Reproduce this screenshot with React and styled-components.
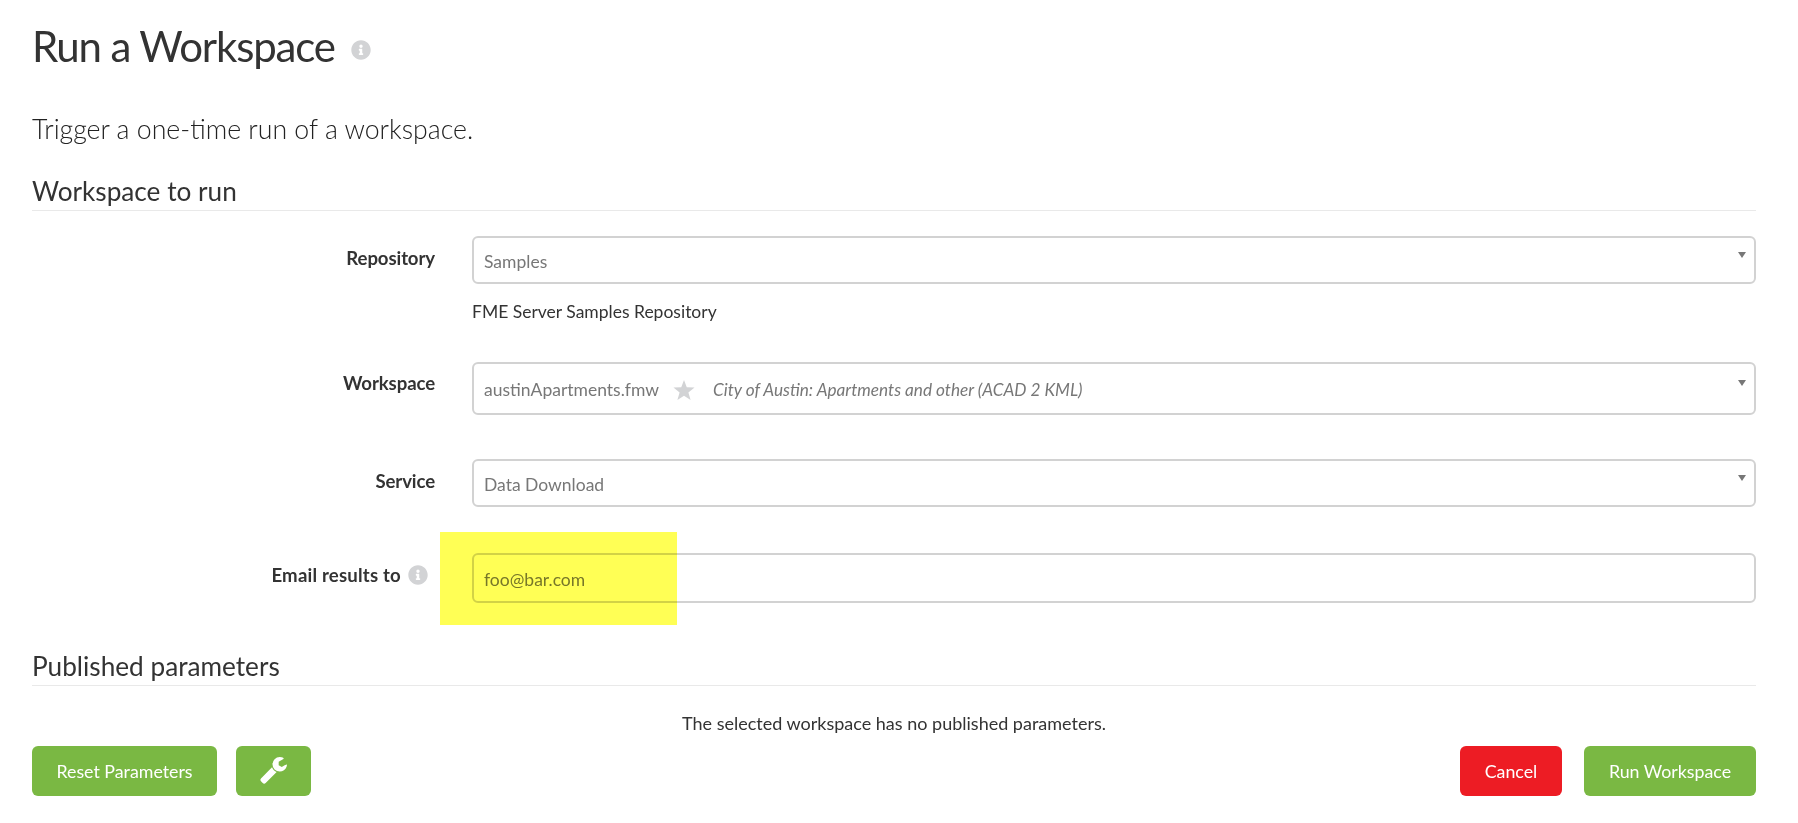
import React from 'react'
import styled, { createGlobalStyle } from 'styled-components'
import { FaInfoCircle } from 'react-icons/fa'

const GlobalStyle = createGlobalStyle`
  html, body {
    margin: 0;
    background: #fff;
    overflow: hidden;
  }
  body {
    font-family: Lato, "Open Sans", sans-serif;
    color: #333;
  }
`

const Page = styled.div`
  width: 1724px;
  margin-left: 32px;
`

const Title = styled.h1`
  display: flex;
  align-items: center;
  margin: 0;
  padding-top: 18px;
  height: 56px;
  font-size: 42px;
  line-height: 56px;
  font-weight: 400;
  letter-spacing: -1.15px;
  color: #333;
`

const TitleInfo = styled(FaInfoCircle)`
  margin: 7px 0 0 16px;
  width: 20px;
  height: 20px;
  color: #d2d3d5;
`

const Lead = styled.p`
  margin: 37px 0 0;
  font-size: 26.7px;
  line-height: 36px;
  font-weight: 300;
  color: #222;
`

const Section = styled.h2`
  margin: ${(p) => p.$top}px 0 0;
  height: ${(p) => p.$height}px;
  font-size: 26.2px;
  line-height: 34px;
  font-weight: 400;
  color: #333;
  border-bottom: 1px solid #e9e9e9;
`

const Row = styled.div`
  position: relative;
  display: grid;
  grid-template-columns: 403px 1fr;
  column-gap: 37px;
  margin-top: ${(p) => p.$top}px;
`

const Label = styled.label`
  display: flex;
  justify-content: flex-end;
  align-items: center;
  gap: 7px;
  height: 40px;
  margin-top: ${(p) => p.$offset}px;
  padding-right: ${(p) => p.$inset || 0}px;
  font-size: 18.6px;
  font-weight: 700;
  letter-spacing: ${(p) => p.$track || -0.1}px;
  color: #333;
`

const LabelInfo = styled(FaInfoCircle)`
  flex: none;
  width: 20px;
  height: 20px;
  color: #d2d3d5;
`

const Select = styled.div`
  box-sizing: border-box;
  display: flex;
  align-items: center;
  height: ${(p) => p.$height}px;
  padding: 2px 8px 0 10px;
  border: 2px solid #d2d2d2;
  border-radius: 6px;
  font-size: 17.5px;
  color: #777;
`

const Arrow = styled.span`
  margin: 0 0 auto auto;
  margin-top: ${(p) => p.$top}px;
  width: 0;
  height: 0;
  border-left: 4px solid transparent;
  border-right: 4px solid transparent;
  border-top: 6px solid #777;
`

const StarIcon = styled.svg`
  margin: 0 18px 0 14px;
  width: 22px;
  height: 22px;
  fill: #d2d3d5;
`

const Summary = styled.em`
  font-size: 17.2px;
  font-style: italic;
`

const Input = styled.input`
  box-sizing: border-box;
  display: block;
  width: 100%;
  height: 50px;
  padding: 2px 10px 0;
  border: 2px solid #d2d2d2;
  border-radius: 6px;
  outline: none;
  background: #fff;
  font-family: inherit;
  font-size: 17.5px;
  color: #777;
`

const Description = styled.div`
  grid-column: 2;
  margin-top: 17px;
  font-size: 17.5px;
  line-height: 22px;
  color: #333;
`

// the marker drawn over the screenshot
const Highlight = styled.div`
  position: absolute;
  left: 408px;
  top: -21px;
  width: 237px;
  height: 93px;
  background: #ffff55;
  mix-blend-mode: multiply;
  pointer-events: none;
`

const NoParams = styled.p`
  margin: 26px 0 0;
  text-align: center;
  font-size: 18px;
  line-height: 22px;
  color: #333;
`

const Actions = styled.div`
  display: flex;
  justify-content: space-between;
  margin-top: 12px;
`

const ButtonGroup = styled.div`
  display: flex;
  gap: ${(p) => p.$gap}px;
`

const Button = styled.button`
  box-sizing: border-box;
  display: flex;
  align-items: center;
  justify-content: center;
  width: ${(p) => p.$width}px;
  height: 50px;
  padding: 0;
  border: none;
  border-radius: 6px;
  background: ${(p) => (p.$danger ? '#ed1c24' : '#7ab843')};
  color: #fff;
  font-family: inherit;
  font-size: 17.8px;
`

const WrenchIcon = styled.svg`
  margin-bottom: 4px;
  width: 29px;
  height: 29px;
  fill: #fff;
`

const Star = () => (
  <StarIcon viewBox="0 0 24 24">
    <polygon points="12,1 15,9 23.5,9.4 16.8,14.6 19.2,23 12,18.2 4.8,23 7.2,14.6 0.5,9.4 9,9" />
  </StarIcon>
)

const Wrench = () => (
  <WrenchIcon viewBox="0 0 1792 1792">
    <path d="M1092 1052l-682 682q-37 37-90 37-52 0-91-37l-106-108q-38-36-38-90 0-53 38-91l681-681q39 98 114.5 173.5t173.5 114.5zm634-435q0 39-23 106-47 134-164.5 217.5t-258.5 83.5q-185 0-316.5-131.5t-131.5-316.5 131.5-316.5 316.5-131.5q58 0 121.5 16.5t107.5 46.5q16 11 16 28t-16 28l-293 169v224l193 107q5-3 79-48.5t135.5-81 70.5-35.5q15 0 23.5 10t8.5 25z" />
  </WrenchIcon>
)

export default function App() {
  return (
    <>
      <GlobalStyle />
      <Page>
        <Title>
          Run a Workspace
          <TitleInfo />
        </Title>
        <Lead>Trigger a one-time run of a workspace.</Lead>
        <Section $top={27} $height={36}>Workspace to run</Section>

        <Row $top={25}>
          <Label $offset={2}>Repository</Label>
          <Select $height={48}>
            Samples
            <Arrow $top={12} />
          </Select>
          <Description>FME Server Samples Repository</Description>
        </Row>

        <Row $top={39}>
          <Label $offset={1}>Workspace</Label>
          <Select $height={53}>
            austinApartments.fmw
            <Star />
            <Summary>City of Austin: Apartments and other (ACAD 2 KML)</Summary>
            <Arrow $top={14} />
          </Select>
        </Row>

        <Row $top={44}>
          <Label $offset={2}>Service</Label>
          <Select $height={48}>
            Data Download
            <Arrow $top={12} />
          </Select>
        </Row>

        <Row $top={46}>
          <Label $offset={2} $inset={7} $track={0.2}>
            Email results to
            <LabelInfo />
          </Label>
          <Input defaultValue="foo@bar.com" />
          <Highlight />
        </Row>

        <Section $top={46} $height={36}>Published parameters</Section>
        <NoParams>The selected workspace has no published parameters.</NoParams>

        <Actions>
          <ButtonGroup $gap={19}>
            <Button $width={185}>Reset Parameters</Button>
            <Button $width={75} aria-label="Settings"><Wrench /></Button>
          </ButtonGroup>
          <ButtonGroup $gap={22}>
            <Button $width={102} $danger>Cancel</Button>
            <Button $width={172}>Run Workspace</Button>
          </ButtonGroup>
        </Actions>
      </Page>
    </>
  )
}
